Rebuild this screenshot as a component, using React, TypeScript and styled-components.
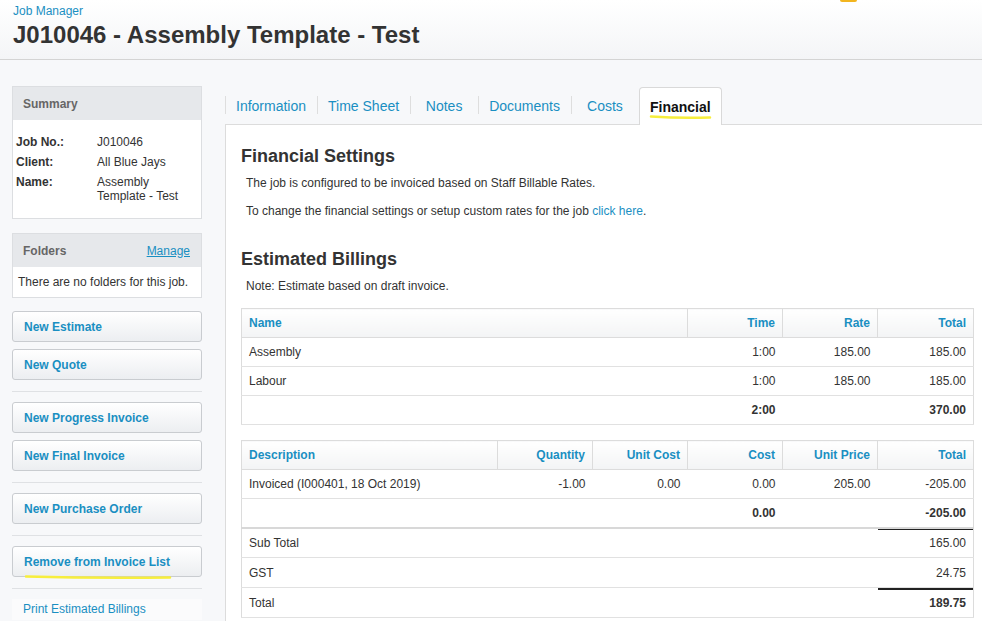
import React from 'react';
import styled, { createGlobalStyle } from 'styled-components';

const GlobalStyle = createGlobalStyle`
  html, body {
    margin: 0;
    padding: 0;
    background: #f7f8fa;
    font-family: 'Liberation Sans', Arial, Helvetica, sans-serif;
    color: #333;
    overflow: hidden;
  }
  * { box-sizing: border-box; }
`;

const blue = '#1a8fc2';

const Page = styled.div`
  position: relative;
  width: 982px;
  height: 621px;
  overflow: hidden;
`;

const TopMark = styled.div`
  position: absolute;
  top: 0;
  left: 840px;
  width: 17px;
  height: 2px;
  background: #f2b51f;
  border-radius: 0 0 2px 2px;
`;

const Header = styled.header`
  height: 60px;
  padding: 4px 13px 0;
  background: linear-gradient(#ffffff, #f4f5f7);
  border-bottom: 1px solid #d4d4d4;
`;

const Crumb = styled.a`
  display: block;
  font-size: 12px;
  line-height: 14px;
  color: ${blue};
  text-decoration: none;
`;

const Title = styled.h1`
  margin: 2px 0 0;
  font-size: 24px;
  line-height: 30px;
  font-weight: bold;
  color: #333;
`;

const Body = styled.div`
  display: flex;
  align-items: flex-start;
`;

const Sidebar = styled.aside`
  width: 190px;
  margin: 26px 0 0 12px;
  flex-shrink: 0;
  display: flex;
  flex-direction: column;
`;

const Box = styled.div<{ $gap?: number }>`
  border: 1px solid #dcdee1;
  background: #fff;
  margin-bottom: ${p => p.$gap ?? 0}px;
`;

const BoxHead = styled.div`
  height: 33px;
  padding: 0 11px 0 10px;
  background: #e6e8eb;
  display: flex;
  align-items: center;
  justify-content: space-between;
  font-size: 12px;
  font-weight: bold;
  color: #666;
`;

const ManageLink = styled.a`
  font-weight: normal;
  color: ${blue};
  text-decoration: underline;
`;

const SummaryGrid = styled.div`
  display: grid;
  grid-template-columns: 81px 1fr;
  row-gap: 6px;
  padding: 15px 8px 15px 3px;
  font-size: 12px;
  line-height: 14px;
`;

const Label = styled.div`
  font-weight: bold;
  color: #333;
`;

const Value = styled.div`
  color: #333;
`;

const BoxText = styled.div`
  padding: 0 5px;
  height: 30px;
  display: flex;
  align-items: center;
  font-size: 12px;
  color: #333;
`;

const ActionButton = styled.a<{ $gap?: number }>`
  position: relative;
  display: flex;
  align-items: center;
  height: 31px;
  padding: 0 11px;
  margin-bottom: ${p => p.$gap ?? 0}px;
  border: 1px solid #c9ccd0;
  border-radius: 3px;
  background: linear-gradient(#ffffff, #eceef1);
  font-size: 12px;
  font-weight: bold;
  color: ${blue};
  text-decoration: none;
`;

const Divider = styled.hr`
  border: 0;
  border-top: 1px solid #dfe1e4;
  margin: 11px 0 10px;
  height: 0;
`;

const PrintLink = styled.a`
  display: block;
  padding: 3px 11px 4px;
  background: #fbfbfc;
  font-size: 12px;
  line-height: 14px;
  color: ${blue};
  text-decoration: none;
`;

const Main = styled.main`
  flex: 1;
  margin: 27px 0 0 23px;
  display: flex;
  flex-direction: column;
`;

const TabBar = styled.nav`
  display: flex;
  align-items: flex-end;
  height: 38px;
  border-bottom: 1px solid #dcdcdc;
`;

const Tab = styled.a<{ $active?: boolean }>`
  position: relative;
  height: ${p => (p.$active ? '38px' : '37px')};
  min-width: 68px;
  padding: ${p => (p.$active ? '0 10px' : '0 11px')};
  display: flex;
  align-items: center;
  justify-content: center;
  font-size: 14px;
  text-decoration: none;
  color: ${p => (p.$active ? '#111' : blue)};
  font-weight: ${p => (p.$active ? 'bold' : 'normal')};
  background: ${p => (p.$active ? '#fff' : 'transparent')};
  border: ${p => (p.$active ? '1px solid #d9d9d9' : '0')};
  border-bottom: 0;
  border-radius: ${p => (p.$active ? '4px 4px 0 0' : '0')};
  margin-bottom: ${p => (p.$active ? '-1px' : '0')};
  &::before {
    content: '';
    display: ${p => (p.$active ? 'none' : 'block')};
    position: absolute;
    left: 0;
    top: 9px;
    height: 18px;
    border-left: 1px solid #dedede;
  }
`;

const Highlight = styled.svg<{ $left: number; $top: number }>`
  position: absolute;
  left: ${p => p.$left}px;
  top: ${p => p.$top}px;
  overflow: visible;
  pointer-events: none;
`;

const Panel = styled.section`
  background: #fff;
  border-left: 1px solid #dcdcdc;
  padding: 20px 9px 20px 15px;
  min-height: 520px;
`;

const Heading = styled.h2<{ $top?: number }>`
  margin: ${p => p.$top ?? 0}px 0 8px;
  font-size: 18px;
  line-height: 22px;
  font-weight: bold;
  color: #333;
`;

const Para = styled.p<{ $gap?: number }>`
  margin: 0 0 ${p => p.$gap ?? 0}px 5px;
  font-size: 12px;
  line-height: 16px;
  color: #333;
`;

const Link = styled.a`
  color: ${blue};
  text-decoration: none;
`;

const Table = styled.table<{ $gap?: number }>`
  width: 732px;
  border-collapse: collapse;
  border: 1px solid #dcdcdc;
  margin-bottom: ${p => p.$gap ?? 0}px;
  font-size: 12px;
  table-layout: fixed;
`;

const Th = styled.th<{ $right?: boolean }>`
  height: 29px;
  padding: 0 7px;
  text-align: ${p => (p.$right ? 'right' : 'left')};
  font-weight: bold;
  color: ${blue};
  background: linear-gradient(#ffffff, #f3f4f5);
  border-left: 1px solid #dcdcdc;
  border-bottom: 1px solid #dcdcdc;
  &:first-child { border-left: 0; }
`;

const Td = styled.td<{ $right?: boolean; $bold?: boolean; $rule?: number; $split?: boolean; $tall?: boolean }>`
  height: ${p => (p.$tall ? 30 : 29)}px;
  padding: 0 7px;
  text-align: ${p => (p.$right ? 'right' : 'left')};
  font-weight: ${p => (p.$bold ? 'bold' : 'normal')};
  color: #333;
  border-bottom: 1px solid #e1e1e1;
  ${p => (p.$split ? 'border-top: 2px solid #d8d8d8;' : '')}
  ${p => (p.$rule ? `box-shadow: inset 0 ${p.$rule}px 0 #222;` : '')}
`;

const billingRows = [
  { name: 'Assembly', time: '1:00', rate: '185.00', total: '185.00' },
  { name: 'Labour', time: '1:00', rate: '185.00', total: '185.00' },
];

const Marker = ({ left, top, width }: { left: number; top: number; width: number }) => (
  <Highlight $left={left} $top={top} width={width} height={4}>
    <path
      d={`M1 1.5 Q ${width / 2} 3.5 ${width - 1} 2.5`}
      stroke="#f7ee3c"
      strokeWidth={2.5}
      fill="none"
      strokeLinecap="round"
    />
  </Highlight>
);

export default function App() {
  return (
    <Page>
      <GlobalStyle />
      <TopMark />
      <Header>
        <Crumb href="#">Job Manager</Crumb>
        <Title>J010046 - Assembly Template - Test</Title>
      </Header>
      <Body>
        <Sidebar>
          <Box $gap={14}>
            <BoxHead>Summary</BoxHead>
            <SummaryGrid>
              <Label>Job No.:</Label>
              <Value>J010046</Value>
              <Label>Client:</Label>
              <Value>All Blue Jays</Value>
              <Label>Name:</Label>
              <Value>Assembly<br />Template - Test</Value>
            </SummaryGrid>
          </Box>
          <Box $gap={13}>
            <BoxHead>
              Folders
              <ManageLink href="#">Manage</ManageLink>
            </BoxHead>
            <BoxText>There are no folders for this job.</BoxText>
          </Box>
          <ActionButton href="#" $gap={7}>New Estimate</ActionButton>
          <ActionButton href="#">New Quote</ActionButton>
          <Divider />
          <ActionButton href="#" $gap={7}>New Progress Invoice</ActionButton>
          <ActionButton href="#">New Final Invoice</ActionButton>
          <Divider />
          <ActionButton href="#">New Purchase Order</ActionButton>
          <Divider />
          <ActionButton href="#">
            Remove from Invoice List
            <Marker left={12} top={28} width={146} />
          </ActionButton>
          <Divider />
          <PrintLink href="#">Print Estimated Billings</PrintLink>
        </Sidebar>
        <Main>
          <TabBar>
            <Tab href="#">Information</Tab>
            <Tab href="#">Time Sheet</Tab>
            <Tab href="#">Notes</Tab>
            <Tab href="#">Documents</Tab>
            <Tab href="#">Costs</Tab>
            <Tab href="#" $active>
              Financial
              <Marker left={10} top={27} width={61} />
            </Tab>
          </TabBar>
          <Panel>
            <Heading>Financial Settings</Heading>
            <Para $gap={12}>The job is configured to be invoiced based on Staff Billable Rates.</Para>
            <Para>
              To change the financial settings or setup custom rates for the job <Link href="#">click here</Link>.
            </Para>
            <Heading $top={29}>Estimated Billings</Heading>
            <Para $gap={14}>Note: Estimate based on draft invoice.</Para>

            <Table $gap={15}>
              <colgroup>
                <col style={{ width: 446 }} />
                <col style={{ width: 95 }} />
                <col style={{ width: 95 }} />
                <col style={{ width: 96 }} />
              </colgroup>
              <thead>
                <tr>
                  <Th>Name</Th>
                  <Th $right>Time</Th>
                  <Th $right>Rate</Th>
                  <Th $right>Total</Th>
                </tr>
              </thead>
              <tbody>
                {billingRows.map(r => (
                  <tr key={r.name}>
                    <Td>{r.name}</Td>
                    <Td $right>{r.time}</Td>
                    <Td $right>{r.rate}</Td>
                    <Td $right>{r.total}</Td>
                  </tr>
                ))}
                <tr>
                  <Td />
                  <Td $right $bold>2:00</Td>
                  <Td />
                  <Td $right $bold>370.00</Td>
                </tr>
              </tbody>
            </Table>

            <Table>
              <colgroup>
                <col style={{ width: 256 }} />
                <col style={{ width: 95 }} />
                <col style={{ width: 95 }} />
                <col style={{ width: 95 }} />
                <col style={{ width: 95 }} />
                <col style={{ width: 96 }} />
              </colgroup>
              <thead>
                <tr>
                  <Th>Description</Th>
                  <Th $right>Quantity</Th>
                  <Th $right>Unit Cost</Th>
                  <Th $right>Cost</Th>
                  <Th $right>Unit Price</Th>
                  <Th $right>Total</Th>
                </tr>
              </thead>
              <tbody>
                <tr>
                  <Td>Invoiced (I000401, 18 Oct 2019)</Td>
                  <Td $right>-1.00</Td>
                  <Td $right>0.00</Td>
                  <Td $right>0.00</Td>
                  <Td $right>205.00</Td>
                  <Td $right>-205.00</Td>
                </tr>
                <tr>
                  <Td />
                  <Td />
                  <Td />
                  <Td $right $bold>0.00</Td>
                  <Td />
                  <Td $right $bold>-205.00</Td>
                </tr>
                <tr>
                  <Td colSpan={5} $split $tall>Sub Total</Td>
                  <Td $right $split $tall $rule={1}>165.00</Td>
                </tr>
                <tr>
                  <Td colSpan={5} $tall>GST</Td>
                  <Td $right $tall>24.75</Td>
                </tr>
                <tr>
                  <Td colSpan={5} $tall>Total</Td>
                  <Td $right $bold $tall $rule={2}>189.75</Td>
                </tr>
              </tbody>
            </Table>
          </Panel>
        </Main>
      </Body>
    </Page>
  );
}
